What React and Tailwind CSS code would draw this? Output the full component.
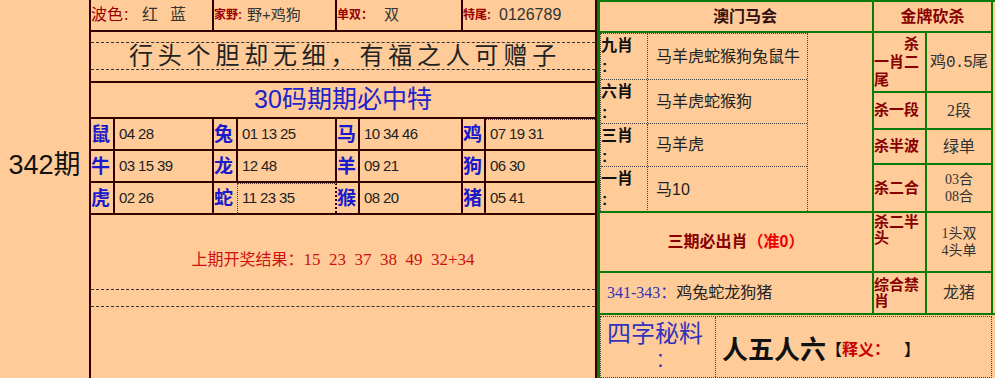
export default function App() {
  const sans = "font-['Liberation_Sans','Noto_Sans_CJK_SC',sans-serif]";
  const serif = "font-['Liberation_Serif','Noto_Sans_CJK_SC',serif]";
  const dk = "border-[#330000]";
  const zodiac = [
    [["鼠", "04 28"], ["兔", "01 13 25"], ["马", "10 34 46"], ["鸡", "07 19 31"]],
    [["牛", "03 15 39"], ["龙", "12 48"], ["羊", "09 21"], ["狗", "06 30"]],
    [["虎", "02 26"], ["蛇", "11 23 35"], ["猴", "08 20"], ["猪", "05 41"]],
  ];
  const labelW = ["w-[24px]", "w-[24px]", "w-[23px]", "w-[23px]"];
  const numW = ["w-[99px]", "w-[99px]", "w-[103px]", "w-[109px]"];

  const shengxiao = [
    ["九肖", "马羊虎蛇猴狗兔鼠牛", "h-[46px]"],
    ["六肖", "马羊虎蛇猴狗", "h-[44px]"],
    ["三肖", "马羊虎", "h-[43px]"],
    ["一肖", "马10", "h-[45px]"],
  ];

  return (
    <div className={`w-[995px] h-[378px] overflow-hidden bg-[#ffcc99] flex ${sans}`}>
      {/* left period */}
      <div className="w-[89px] h-full shrink-0 flex items-center justify-center pb-[48px] text-[27px] text-[#111]">
        342期
      </div>

      {/* middle */}
      <div className={`w-[508px] h-full shrink-0 border-x-2 ${dk} flex flex-col`}>
        {/* row1 */}
        <div className={`h-[32px] shrink-0 border-b-2 ${dk} flex text-[#333]`}>
          <div className={`w-[123px] border-r-2 ${dk} flex items-center text-[16px]`}>
            <span className="text-[#990000]">波色</span>
            <span className="text-[#990000] text-[13px]">：</span>
            <span className={`${serif} ml-[6px]`}>红</span>
            <span className={`${serif} ml-[12px]`}>蓝</span>
          </div>
          <div className={`w-[123px] border-r-2 ${dk} flex items-center`}>
            <span className="text-[#990000] text-[12px] font-bold">家野</span>
            <span className="text-[#990000] text-[12px] font-bold w-[9px]">:</span>
            <span className="text-[15px]">野+鸡狗</span>
          </div>
          <div className={`w-[126px] border-r-2 ${dk} flex items-center`}>
            <span className="text-[#990000] text-[12px] font-bold">单双</span>
            <span className="text-[#990000] text-[12px] font-bold">：</span>
            <span className="text-[15px] ml-[11px]">双</span>
          </div>
          <div className="w-[132px] flex items-center">
            <span className="text-[#990000] text-[12px] font-bold">特尾</span>
            <span className="text-[#990000] text-[12px] font-bold w-[12px]">:</span>
            <span className="text-[16px]">0126789</span>
          </div>
        </div>

        {/* slogan */}
        <div className={`h-[51px] shrink-0 border-b-2 ${dk} pt-[10px]`}>
          <div className="h-[28px] border-y border-dashed border-[#333] flex items-center justify-center text-[24px] tracking-[4.8px] text-[#222] pl-[4px]">
            行头个胆却无细，有福之人可赠子
          </div>
        </div>

        {/* 30码 */}
        <div className={`h-[36px] shrink-0 border-b-2 ${dk} flex items-center justify-center text-[25px] text-[#2222cc]`}>
          30码期期必中特
        </div>

        {/* zodiac rows */}
        {zodiac.map((row, ri) => (
          <div key={ri} className={`h-[32px] shrink-0 border-b-2 ${dk} flex`}>
            {row.map(([z, n], ci) => {
              const dottedNum = (ri === 2 && ci === 1) || (ri === 0 && ci === 3);
              return (
                <div key={ci} className="flex">
                  <div
                    className={`${labelW[ci]} h-full ${
                      ri === 2 && ci === 1 ? "border-r border-dotted border-[#553333] pr-[1px]" : `border-r-2 ${dk}`
                    } flex items-center text-[19px] font-bold text-[#1a1acc] leading-none`}
                  >
                    {z}
                  </div>
                  <div
                    className={`${numW[ci]} h-full ${
                      ci < 3 ? `border-r-2 ${dk}` : ""
                    } ${dottedNum ? "border-t border-dotted border-t-[#553333]" : ""} flex items-center pl-[4px] text-[15px] tracking-[-0.6px] text-[#222] whitespace-pre`}
                  >
                    {n}
                  </div>
                </div>
              );
            })}
          </div>
        ))}

        {/* results */}
        <div className="h-[74px] shrink-0 pt-[16px] pr-[20px] flex items-center justify-center text-[16px] text-[#cc1111]">
          <span>上期开奖结果：</span>
          <span className={`${serif} whitespace-pre text-[17px]`}>15  23  37  38  49  32+34</span>
        </div>
        <div className="h-[18px] shrink-0 border-y border-dashed border-[#333]"></div>
      </div>

      {/* right panel */}
      <div className="flex-1 h-full border-l-[3px] border-t-2 border-[#0a7a0a] flex flex-col">
        <div className="h-[311px] shrink-0 flex">
          {/* left column */}
          <div className="w-[274px] shrink-0 border-r-2 border-[#0a7a0a] flex flex-col">
            <div className="h-[31px] shrink-0 border-b-2 border-[#0a7a0a] flex items-center justify-center pl-[18px] text-[16px] font-bold text-[#331111]">
              澳门马会
            </div>
            <div className="h-[180px] shrink-0 border-b-2 border-[#0a7a0a]">
              <div className="w-[208px] border border-dotted border-[#444]">
                {shengxiao.map(([l, c, h], i) => (
                  <div key={i} className={`${h} flex ${i < 3 ? "border-b border-dotted border-[#444]" : ""}`}>
                    <div className="w-[47px] h-full border-r border-dotted border-[#444] text-[16px] font-bold text-[#111] leading-[21px] pt-[1px]">
                      {l}
                      <br />
                      <span className="pl-[1px]">:</span>
                    </div>
                    <div className="flex-1 flex items-center pl-[8px] text-[16px] text-[#222]">{c}</div>
                  </div>
                ))}
              </div>
            </div>
            <div className="h-[60px] shrink-0 border-b-2 border-[#0a7a0a] flex items-center justify-center text-[16px] font-bold">
              <span className="text-[#880000]">三期必出肖</span>
              <span className="text-[#ee0000]">（准0）</span>
            </div>
            <div className="h-[40px] shrink-0 flex items-center pl-[7px] text-[16px]">
              <span className={`${serif} text-[#3333bb]`}>341-343：</span>
              <span className="text-[#222]">鸡兔蛇龙狗猪</span>
            </div>
          </div>

          {/* right column */}
          <div className="w-[119px] shrink-0 border-r-2 border-[#0a7a0a] flex flex-col text-[#333]">
            <div className="h-[31px] shrink-0 border-b-2 border-[#0a7a0a] flex items-center justify-center text-[16px] font-bold text-[#880000]">
              金牌砍杀
            </div>
            {[
              [
                "h-[60px]",
                <div className="w-full text-[15px] leading-[18px] font-bold text-[#880000]">
                  <div className="text-right pr-[6px]">杀</div>
                  <div>一肖二</div>
                  <div>尾</div>
                </div>,
                <span className="text-[16px]">
                  鸡<span className="font-['Liberation_Mono',monospace] tracking-[-1px]">0.5</span>尾
                </span>,
              ],
              ["h-[37px]", <span className="text-[15px] font-bold text-[#880000]">杀一段</span>, <span className="text-[16px]"><span className={serif}>2</span>段</span>],
              ["h-[35px]", <span className="text-[15px] font-bold text-[#880000]">杀半波</span>, <span className="text-[16px]">绿单</span>],
              [
                "h-[48px]",
                <span className="text-[15px] font-bold text-[#880000]">杀二合</span>,
                <div className="text-[14px] leading-[17px] text-center">
                  <div><span className={serif}>03</span>合</div>
                  <div><span className={serif}>08</span>合</div>
                </div>,
              ],
              [
                "h-[60px]",
                <span className="text-[15px] leading-[16px] font-bold text-[#880000] self-start pt-[1px]">杀二半头</span>,
                <div className="text-[14px] leading-[17px] text-center">
                  <div><span className={serif}>1</span>头双</div>
                  <div><span className={serif}>4</span>头单</div>
                </div>,
              ],
              ["h-[40px]", <span className="text-[15px] leading-[16px] font-bold text-[#880000]">综合禁肖</span>, <span className="text-[16px]">龙猪</span>],
            ].map(([h, l, v], i) => (
              <div key={i} className={`${h} shrink-0 flex ${i < 5 ? "border-b-2 border-[#0a7a0a]" : ""}`}>
                <div className="w-[53px] h-full shrink-0 border-r-2 border-[#0a7a0a] flex items-center">{l}</div>
                <div className="flex-1 h-full flex items-center justify-center">{v}</div>
              </div>
            ))}
          </div>
        </div>

        {/* bottom 四字秘料 */}
        <div className="flex-1 border-t-2 border-[#0a7a0a] pt-[1px]">
          <div className="w-[392px] h-full border border-dotted border-[#444] flex">
            <div className="w-[115px] h-full border-r border-dotted border-[#444] text-[#3333bb] text-[24px] leading-[28px] pl-[6px] pt-[3px]">
              四字秘料
              <div className="pl-[50px] leading-[22px]">:</div>
            </div>
            <div className="flex-1 flex items-center pl-[6px] pt-[6px]">
              <span className="text-[26px] font-bold text-[#111]">人五人六</span>
              <span className="text-[16px] font-bold">
                <span className="text-[#111]">【</span>
                <span className="text-[#cc0000]">释义：</span>
                <span className="text-[#111] ml-[22px]">】</span>
              </span>
            </div>
          </div>
        </div>
      </div>
    </div>
  );
}
